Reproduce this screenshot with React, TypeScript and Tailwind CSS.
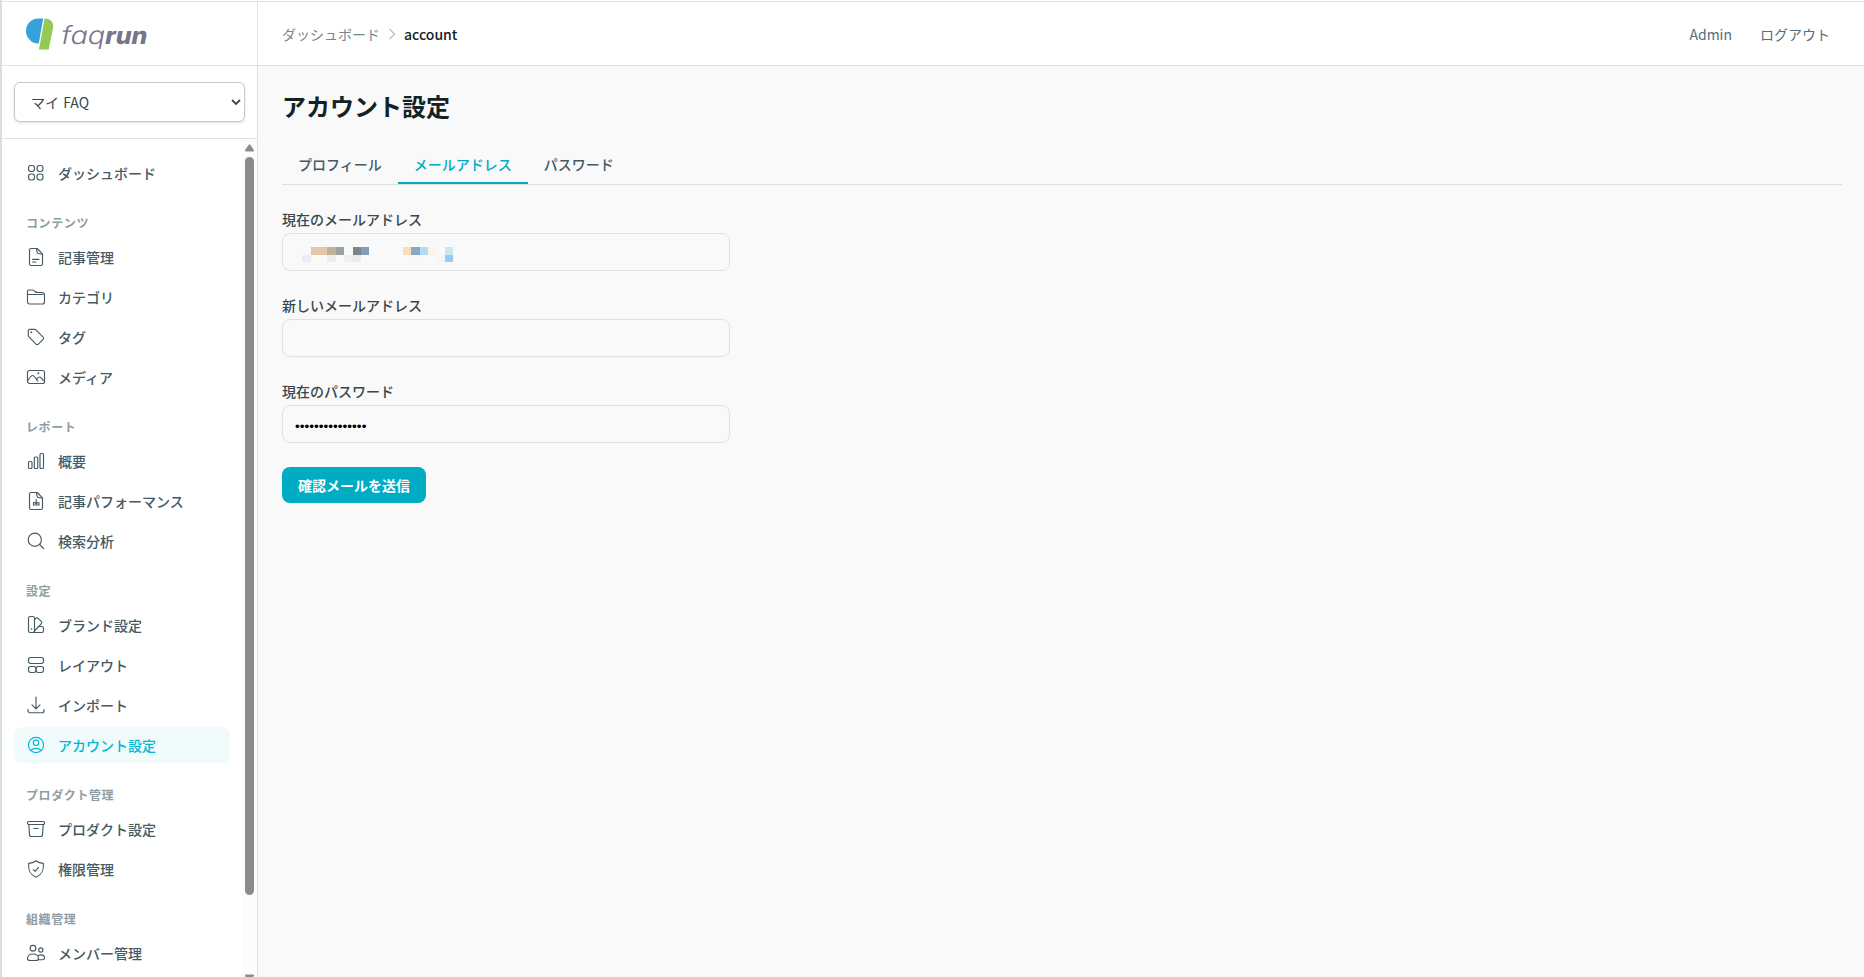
import React from "react";

const icons: Record<string, React.ReactNode> = {
  dashboard: (
    <>
      <rect x="2.5" y="2.5" width="6" height="6" rx="2.4" />
      <rect x="11" y="2.5" width="6" height="6" rx="2.4" />
      <rect x="2.5" y="11" width="6" height="6" rx="2.4" />
      <rect x="11" y="11" width="6" height="6" rx="2.4" />
    </>
  ),
  article: (
    <>
      <path d="M5 1.5h6.2l5.3 5.3V17a1.5 1.5 0 0 1-1.5 1.5H5A1.5 1.5 0 0 1 3.5 17V3A1.5 1.5 0 0 1 5 1.5z" />
      <path d="M10.5 1.7c0.5 2 0.3 3.8 1 4.5c0.7 0.7 2.7 0.7 4.8 1M6.5 12.3h6.5M6.5 15h3.5" />
    </>
  ),
  folder: (
    <>
      <path d="M1.5 15V4.5A1.5 1.5 0 0 1 3 3h3.5c1 0 1.5 0.5 2.5 1.5s1.5 1 2.5 1H16a2.5 2.5 0 0 1 2.5 2.5v7a2 2 0 0 1-2 2h-13a2 2 0 0 1-2-2z" />
      <path d="M1.5 7.5h15.5" />
    </>
  ),
  tag: (
    <>
      <path d="M2.3 3.8A1.5 1.5 0 0 1 3.8 2.3h4.7c0.6 0 1 0.2 1.4 0.6l7.2 7.2a1.6 1.6 0 0 1 0 2.3l-4.8 4.8a1.6 1.6 0 0 1-2.3 0L2.9 9.9c-0.4-0.4-0.6-0.9-0.6-1.4z" />
      <circle cx="5.3" cy="5.2" r="0.4" />
    </>
  ),
  media: (
    <>
      <rect x="1.5" y="3.5" width="17" height="13" rx="2" />
      <path d="M2 13.2c1.5-2.2 3-4.7 4.5-4.7c1.8 0 3.5 3.3 5.3 5.5M10.5 12.5c1.2-1.7 2-2.5 3-2.5s2 1.5 3.8 3.5" />
      <circle cx="12.3" cy="6.3" r="0.4" />
    </>
  ),
  bars: (
    <>
      <rect x="2.5" y="10.5" width="3.5" height="7" rx="1" />
      <rect x="8.3" y="6" width="3.5" height="11.5" rx="1" />
      <rect x="14" y="2.5" width="3.5" height="15" rx="1" />
    </>
  ),
  performance: (
    <>
      <path d="M5 1.5h6.2l5.3 5.3V17a1.5 1.5 0 0 1-1.5 1.5H5A1.5 1.5 0 0 1 3.5 17V3A1.5 1.5 0 0 1 5 1.5z" />
      <path d="M10.5 1.7c0.5 2 0.3 3.8 1 4.5c0.7 0.7 2.7 0.7 4.8 1M7.5 11.5v2.5h5.5V11.5M10.2 8.5v4M8.7 11.5l1.5 1.3l1.5-1.3" />
    </>
  ),
  search: (
    <>
      <circle cx="8.8" cy="8.7" r="6.6" />
      <path d="M13.6 13.5l4 4" />
    </>
  ),
  swatch: (
    <>
      <rect x="2.5" y="1.5" width="6" height="16" rx="1.8" />
      <path d="M8.5 4.7l1.3-1.3a1.7 1.7 0 0 1 2.4 0l3 3a1.7 1.7 0 0 1 0 2.4L8 16.5M12 11.5h3.8a1.7 1.7 0 0 1 1.7 1.7v2.6a1.7 1.7 0 0 1-1.7 1.7H5.5" />
      <circle cx="5.5" cy="14" r="0.3" />
    </>
  ),
  layout: (
    <>
      <rect x="2.5" y="2.5" width="15" height="6" rx="2.2" />
      <rect x="2.5" y="11.5" width="7.5" height="6" rx="2.2" />
      <rect x="10" y="11.5" width="7.5" height="6" rx="2.2" />
    </>
  ),
  download: <path d="M10 2v11.5M6 9.8l4 4l4-4M2 14.5v1.2a2 2 0 0 0 2 2h12a2 2 0 0 0 2-2v-1.2" />,
  account: (
    <>
      <circle cx="10" cy="10" r="7.6" />
      <circle cx="10" cy="7.8" r="2.7" />
      <path d="M5 15.5c0.8-1.7 2.7-2.2 5-2.2s4.2 0.5 5 2.2" />
    </>
  ),
  archive: (
    <>
      <rect x="1.5" y="2.5" width="17" height="3" rx="1" />
      <path d="M2.8 5.5l0.7 10a2 2 0 0 0 2 2h9a2 2 0 0 0 2-2l0.7-10M7.8 9.5h4.4" />
    </>
  ),
  shield: (
    <>
      <path d="M10 1.8c2 1.6 4.5 2.4 7.4 2.6c0.5 6.2-0.5 11-7.4 13.8C3.1 15.4 2.1 10.6 2.6 4.4C5.5 4.2 8 3.4 10 1.8z" />
      <path d="M7.3 10.6l1.8 1.8l3.4-4" />
    </>
  ),
  members: (
    <>
      <circle cx="7" cy="5.2" r="2.9" />
      <circle cx="14.8" cy="7" r="2.1" />
      <path d="M7 11c-3.2 0-5.5 2-5.5 4.5c0 1.5 1 2 2.5 2h6c1.5 0 2.5-0.5 2.5-2C12.5 13 10.2 11 7 11zM12.5 12.5c0.7-0.5 1.5-0.7 2.3-0.7c2.2 0 3.7 1.5 3.7 3.2c0 1.2-0.7 1.7-2 1.7h-3.5" />
    </>
  ),
};

function Icon({ name }: { name: string }) {
  return (
    <svg
      className="size-5 shrink-0"
      viewBox="0 0 20 20"
      fill="none"
      stroke="currentColor"
      strokeWidth="1.15"
      strokeLinecap="round"
      strokeLinejoin="round"
    >
      {icons[name]}
    </svg>
  );
}

type Item = { icon: string; label: string; active?: boolean };

const groups: { title?: string; items: Item[] }[] = [
  { items: [{ icon: "dashboard", label: "ダッシュボード" }] },
  {
    title: "コンテンツ",
    items: [
      { icon: "article", label: "記事管理" },
      { icon: "folder", label: "カテゴリ" },
      { icon: "tag", label: "タグ" },
      { icon: "media", label: "メディア" },
    ],
  },
  {
    title: "レポート",
    items: [
      { icon: "bars", label: "概要" },
      { icon: "performance", label: "記事パフォーマンス" },
      { icon: "search", label: "検索分析" },
    ],
  },
  {
    title: "設定",
    items: [
      { icon: "swatch", label: "ブランド設定" },
      { icon: "layout", label: "レイアウト" },
      { icon: "download", label: "インポート" },
      { icon: "account", label: "アカウント設定", active: true },
    ],
  },
  {
    title: "プロダクト管理",
    items: [
      { icon: "archive", label: "プロダクト設定" },
      { icon: "shield", label: "権限管理" },
    ],
  },
  { title: "組織管理", items: [{ icon: "members", label: "メンバー管理" }] },
];

function Logo() {
  return (
    <svg className="h-9 w-[126px] overflow-visible" viewBox="0 0 126 36">
      <path d="M17.2 2.5H13A12.5 12.5 0 0 0 12 27.5H12.8z" fill="#35a2dc" />
      <path d="M18.6 2.5C24.5 2.5 28 6.5 27 12L22.7 33.500H13z" fill="#96c953" />
      <g
        fill="#777589"
        transform="translate(34 28) skewX(-11)"
        className="font-['Inter',sans-serif] [font-feature-settings:'cv11']"
      >
        <text x="0" y="0" fontSize="25" fontWeight="300" textLength="44" lengthAdjust="spacingAndGlyphs">
          faq
        </text>
        <text x="44" y="0" fontSize="24" fontWeight="800" textLength="42" lengthAdjust="spacingAndGlyphs">
          run
        </text>
      </g>
    </svg>
  );
}

function Sidebar() {
  return (
    <aside className="flex w-64 shrink-0 flex-col border-r border-[#e0e0e0] bg-white">
      <div className="flex h-16 shrink-0 items-center border-b border-[#e0e0e0] pl-6">
        <Logo />
      </div>
      <div className="h-[73px] shrink-0 border-b border-[#e0e0e0] px-3 pt-4">
        <div className="flex h-10 w-[231px] items-center justify-between rounded-md border border-[#c5cacd] bg-white pr-[3px] pl-4 text-sm text-[#37474f] shadow-sm">
          <span className="[word-spacing:1px]">マイ FAQ</span>
          <svg className="h-2.5 w-2.5" viewBox="0 0 10 10" fill="none" stroke="#37474f" strokeWidth="1.8">
            <path d="M1 3l4 4l4-4" />
          </svg>
        </div>
      </div>
      <div className="flex min-h-0 flex-1">
        <nav className="min-w-0 flex-1 overflow-hidden px-3 py-4">
          {groups.map((g, i) => (
            <div key={i} className={i ? "mt-6" : ""}>
              {g.title && (
                <h3 className="mb-2 pl-3 text-xs leading-4 font-bold tracking-[0.6px] text-[#8f9da3]">{g.title}</h3>
              )}
              <ul className="flex flex-col gap-1">
                {g.items.map((it) => (
                  <li
                    key={it.label}
                    className={
                      it.active
                        ? "flex h-9 items-center gap-3 rounded-lg bg-[#f1fbfc] px-3 text-sm font-medium text-[#00b8d4]"
                        : "flex h-9 items-center gap-3 rounded-lg px-3 text-sm font-medium text-[#455a64]"
                    }
                  >
                    <Icon name={it.icon} />
                    <span>{it.label}</span>
                  </li>
                ))}
              </ul>
            </div>
          ))}
        </nav>
        <div className="flex w-[15px] shrink-0 flex-col items-center overflow-hidden bg-[#fcfcfc] pt-[5px]">
          <svg className="h-2 w-[9px] shrink-0" viewBox="0 0 9 8" fill="#8b8b8b">
            <path d="M3.7 0.7a1 1 0 0 1 1.6 0L8.9 6a1 1 0 0 1-0.9 1.5H1A1 1 0 0 1 0.1 6z" />
          </svg>
          <div className="mt-[5px] h-[738px] w-[9px] shrink-0 rounded-full bg-[#8b8b8b]" />
          <svg className="mt-[79px] h-2 w-[9px] shrink-0" viewBox="0 0 9 8" fill="#8b8b8b">
            <path d="M3.7 7.3a1 1 0 0 0 1.6 0L8.9 2A1 1 0 0 0 8 0.5H1A1 1 0 0 0 0.1 2z" />
          </svg>
        </div>
      </div>
    </aside>
  );
}

const mosaic: [number, number, number, string][] = [
  [9, 0, 16, "#e4c7aa"],
  [25, 0, 9, "#bfb09a"],
  [34, 0, 8, "#9aa3a1"],
  [51, 0, 8, "#7c8689"],
  [59, 0, 8, "#829fb8"],
  [101, 0, 8, "#fadcba"],
  [109, 0, 9, "#88a8c4"],
  [118, 0, 8, "#b5dbfb"],
  [126, 0, 8, "#fbf4e2"],
  [143, 0, 8, "#c9e9ea"],
  [0, 8, 9, "#e9edf5"],
  [9, 8, 9, "#f9faf5"],
  [25, 8, 9, "#f3ebe9"],
  [42, 8, 9, "#e9f1f8"],
  [51, 8, 8, "#eae9ec"],
  [109, 8, 9, "#f4f8fb"],
  [134, 8, 9, "#f2f6fb"],
  [143, 8, 8, "#92cdfa"],
];

function Field({ label, children }: { label: string; children?: React.ReactNode }) {
  return (
    <div className="flex flex-col gap-1">
      <label className="h-5 text-sm leading-5 font-medium text-[#37474f]">{label}</label>
      <div className="flex h-[38px] items-center rounded-lg border border-[#e0e0e0] px-3">{children}</div>
    </div>
  );
}

export default function App() {
  return (
    <div className="flex h-[977px] w-full overflow-hidden border-l-2 border-[#d9dde6] bg-[#f9f9f9] font-['Noto_Sans_CJK_JP',sans-serif]">
      <div className="flex min-w-0 flex-1 flex-col">
        <div className="h-0.5 shrink-0 border-b border-[#e0e0e0] bg-white" />
        <div className="flex min-h-0 flex-1">
          <Sidebar />
          <div className="flex min-w-0 flex-1 flex-col">
            <header className="flex h-16 shrink-0 items-center justify-between border-b border-[#e0e0e0] bg-white pr-[34px] pl-6 text-sm">
              <div className="flex items-center">
                <span className="text-[#78878d]">ダッシュボード</span>
                <svg className="mx-1.5 h-3 w-3" viewBox="0 0 12 12" fill="none" stroke="#b0bec5" strokeWidth="1.2">
                  <path d="M3.5 0.8l5 5.2l-5 5.2" />
                </svg>
                <span className="font-medium text-[#132226]">account</span>
              </div>
              <div className="flex gap-7 text-[#546e7a]">
                <span>Admin</span>
                <span>ログアウト</span>
              </div>
            </header>
            <main className="pt-6 pr-[22px] pl-6">
              <h1 className="text-2xl leading-8 font-bold text-[#132226]">アカウント設定</h1>
              <div className="mt-6 flex h-[39px] border-b border-[#e0e0e0] text-sm font-medium text-[#455a64]">
                <div className="h-[38px] px-4 pt-2 leading-5">プロフィール</div>
                <div className="h-[38px] border-b-2 border-[#00acc1] px-4 pt-2 leading-5 text-[#00acc1]">メールアドレス</div>
                <div className="h-[38px] px-4 pt-2 leading-5">パスワード</div>
              </div>
              <form className="mt-6 flex w-[448px] flex-col items-stretch gap-6">
                <Field label="現在のメールアドレス">
                  <svg className="mt-[5px] ml-[7px] h-[15px] w-[151px]" viewBox="0 0 151 15" shapeRendering="crispEdges">
                    {mosaic.map(([x, y, w, c]) => (
                      <rect key={`${x}-${y}`} x={x} y={y} width={w} height={y ? 7 : 8} fill={c} />
                    ))}
                  </svg>
                </Field>
                <Field label="新しいメールアドレス" />
                <Field label="現在のパスワード">
                  <input
                    type="password"
                    readOnly
                    value="abcdefghijklmno"
                    className="mt-1.5 w-full bg-transparent font-['Liberation_Sans',sans-serif] text-[13.6px] text-black outline-none"
                  />
                </Field>
                <button type="button" className="h-9 w-36 rounded-lg bg-[#00acc4] text-sm font-bold text-white">
                  確認メールを送信
                </button>
              </form>
            </main>
          </div>
        </div>
      </div>
    </div>
  );
}
